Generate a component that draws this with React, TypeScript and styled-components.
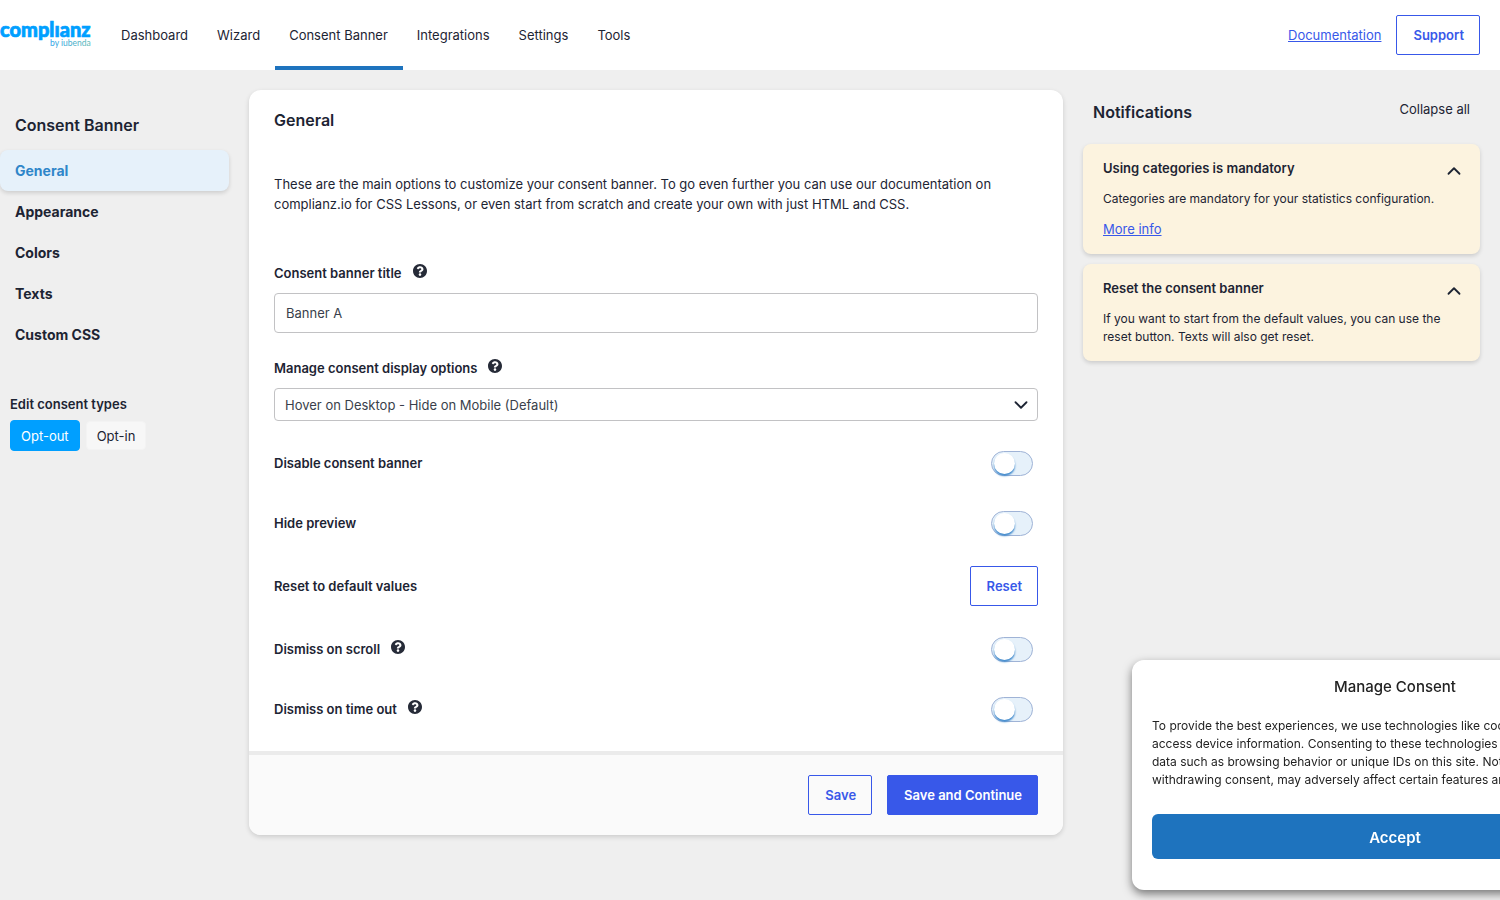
import React from "react";
import styled, { createGlobalStyle, css } from "styled-components";
import { ChevronDown, ChevronUp } from "lucide-react";

const INK = "#1d2433";
const BLUE = "#3858e9";
const BRAND = "#1e73be";

const GlobalStyle = createGlobalStyle`
  *, *::before, *::after { box-sizing: border-box; }
  body {
    margin: 0;
    background: #efefef;
    color: ${INK};
    font-family: Inter, "Liberation Sans", sans-serif;
    font-size: 13px;
    line-height: 20px;
    overflow-x: hidden;
  }
  h1, h2, h3, p, ul { margin: 0; padding: 0; }
  ul { list-style: none; }
  button, input, select { font: inherit; color: inherit; }
  button { cursor: pointer; }
`;

const Header = styled.header`
  display: flex;
  align-items: stretch;
  height: 70px;
  padding-right: 20px;
  background: #fff;
`;

const Logo = styled.svg`
  width: 92px;
  height: 70px;
  flex: none;
  margin-right: 15px;
`;

const Nav = styled.nav`
  display: flex;
  flex: 1;
`;

const NavLink = styled.a<{ $active?: boolean }>`
  display: flex;
  align-items: center;
  padding: 4px 15px 0 14px;
  color: inherit;
  text-decoration: none;
  border-bottom: 4px solid ${(p) => (p.$active ? BRAND : "transparent")};
`;

const HeaderActions = styled.div`
  display: flex;
  align-items: center;
  gap: 15px;
`;

const TextLink = styled.a`
  color: ${BLUE};
  text-decoration: underline;
`;

const Button = styled.button<{ $primary?: boolean }>`
  height: 40px;
  padding: 0 15px 0 16px;
  border: 1px solid ${BLUE};
  border-radius: 2px;
  background: ${(p) => (p.$primary ? BLUE : "transparent")};
  color: ${(p) => (p.$primary ? "#fff" : BLUE)};
  font-weight: 600;
`;

const Page = styled.div`
  display: grid;
  grid-template-columns: 229px minmax(0, 1fr) 397px;
  gap: 20px;
  align-items: start;
  padding: 20px 20px 65px 0;
`;

const SideTitle = styled.h1`
  padding: 25px 15px 15px;
  font-size: 16px;
  font-weight: 600;
`;

const SideLink = styled.a<{ $active?: boolean }>`
  display: block;
  padding: 11px 15px 10px;
  border-radius: 8px;
  color: ${INK};
  font-size: 14px;
  font-weight: 700;
  text-decoration: none;
  ${(p) =>
    p.$active &&
    css`
      background: #e6f1fa;
      color: #2f86c9;
      box-shadow: 0 2px 4px rgba(0, 0, 0, 0.14);
    `}
`;

const ConsentTypes = styled.section`
  padding: 39px 10px 0;
`;

const SubTitle = styled.h2`
  font-size: 13px;
  font-weight: 600;
`;

const TypeRow = styled.div`
  display: flex;
  align-items: center;
  gap: 6px;
  padding-top: 6px;
`;

const TypeButton = styled.button<{ $active?: boolean }>`
  height: ${(p) => (p.$active ? 31 : 29)}px;
  padding: 0 10px;
  border: 1px solid ${(p) => (p.$active ? "#009fff" : "#f3f3f3")};
  border-radius: 4px;
  background: ${(p) => (p.$active ? "#009fff" : "#f7f7f7")};
  color: ${(p) => (p.$active ? "#fff" : INK)};
`;

const Card = styled.form`
  border-radius: 12px;
  background: #fff;
  box-shadow: 0 2px 5px rgba(0, 0, 0, 0.15);
`;

const CardBody = styled.div`
  padding: 20px 25px 25px;
`;

const CardTitle = styled.h2`
  font-size: 16px;
  font-weight: 600;
`;

const Intro = styled.p`
  padding: 44px 0 49px;
`;

const Field = styled.div`
  padding-bottom: 25px;
`;

const Label = styled.div`
  display: flex;
  gap: 11px;
  font-weight: 600;
  svg { margin-top: 1px; }
`;

const FieldLabel = styled(Label)`
  padding-bottom: 10px;
`;

const TextInput = styled.input`
  display: block;
  width: 100%;
  height: 40px;
  padding: 0 11px;
  border: 1px solid #c2c2c4;
  border-radius: 4px;
  background: #fff;
  color: #3a3f4b;
`;

const SelectWrap = styled.div`
  position: relative;
  svg {
    position: absolute;
    top: 6px;
    right: 6px;
    pointer-events: none;
  }
`;

const Select = styled.select`
  appearance: none;
  display: block;
  width: 100%;
  height: 33px;
  padding: 0 10px;
  border: 1px solid #c2c2c4;
  border-radius: 4px;
  background: #fff;
  color: #3a3f4b;
`;

const Options = styled.div`
  display: grid;
  gap: 26px;
`;

const Option = styled.div`
  display: flex;
  align-items: center;
  justify-content: space-between;
  min-height: 34px;
`;

const Toggle = styled.input`
  appearance: none;
  width: 42px;
  height: 25px;
  margin: 0 5px 0 0;
  padding: 1px 2px;
  border: 1px solid #9fb3d6;
  border-radius: 13px;
  background: #e6f1fa;
  cursor: pointer;
  &::before {
    content: "";
    display: block;
    width: 21px;
    height: 21px;
    border-radius: 50%;
    background: #fff;
    box-shadow: 0 2px 2px #3c87cb;
  }
  &:checked::before { margin-left: 15px; }
`;

const CardFooter = styled.div`
  display: flex;
  justify-content: flex-end;
  gap: 15px;
  padding: 20px 25px;
  border-top: 4px solid #ebebeb;
  border-radius: 0 0 12px 12px;
  background: #fafafa;
`;

const NoticeHeader = styled.div`
  display: flex;
  justify-content: space-between;
  align-items: flex-start;
  padding: 9px 10px 22px;
`;

const NoticeTitle = styled.h2`
  padding-top: 3px;
  font-size: 16px;
  font-weight: 600;
`;

const PlainButton = styled.button`
  display: block;
  padding: 0;
  border: 0;
  background: none;
`;

const Notice = styled.article`
  margin-bottom: 10px;
  padding: 14px 15px 15px 20px;
  border-radius: 8px;
  background: #fcf3df;
  box-shadow: 0 2px 4px rgba(0, 0, 0, 0.15);
`;

const NoticeTop = styled.div`
  display: flex;
  justify-content: space-between;
  height: 32px;
  button { height: 22px; margin-top: 2px; }
`;

const NoticeText = styled.p`
  padding-right: 5px;
  font-size: 12px;
  line-height: 18px;
`;

const NoticeMore = styled.p`
  padding-top: 11px;
`;

const Banner = styled.section`
  position: fixed;
  right: -158px;
  bottom: 10px;
  width: 526px;
  padding: 15px 20px 31px;
  border-radius: 12px;
  background: #fff;
  color: #222;
  box-shadow: 0 4px 10px rgba(0, 0, 0, 0.5);
`;

const BannerTitle = styled.h2`
  padding: 2px 0 20px;
  font-size: 15px;
  font-weight: 500;
  text-align: center;
`;

const BannerText = styled.p`
  padding-bottom: 25px;
  font-size: 12px;
  line-height: 18px;
`;

const AcceptButton = styled.button`
  display: block;
  width: 100%;
  height: 45px;
  padding: 3px 0 0;
  border: 0;
  border-radius: 6px;
  background: ${BRAND};
  color: #fff;
  font-size: 15px;
  font-weight: 600;
`;

const HelpIcon = () => (
  <svg width="14" height="14" viewBox="8 8 496 496" role="img" aria-label="Help">
    <path
      fill="#262b38"
      d="M504 256c0 137-111 248-248 248S8 393 8 256 119 8 256 8s248 111 248 248zM262.700 90c-54.500 0-89.300 23-116.500 63.800-3.500 5.300-2.400 12.400 2.700 16.300l34.700 26.300c5.200 3.900 12.600 3 16.700-2.100 17.900-22.700 30.100-35.800 57.300-35.800 20.400 0 45.700 13.100 45.700 33 0 15-12.400 22.700-32.500 34C247.100 238.500 216 254.900 216 296v4c0 6.600 5.400 12 12 12h56c6.600 0 12-5.400 12-12v-1.300c0-28.500 83.200-29.600 83.200-106.700 0-58-60.200-102-116.500-102zM256 338c-25.400 0-46 20.600-46 46s20.600 46 46 46 46-20.600 46-46-20.600-46-46-46z"
    />
  </svg>
);

const NAV_ITEMS = ["Dashboard", "Wizard", "Consent Banner", "Integrations", "Settings", "Tools"];
const SIDE_ITEMS = ["General", "Appearance", "Colors", "Texts", "Custom CSS"];
const TOGGLES_TOP = ["Disable consent banner", "Hide preview"];
const TOGGLES_BOTTOM = ["Dismiss on scroll", "Dismiss on time out"];

const ToggleOption = ({ label, help }: { label: string; help?: boolean }) => {
  const id = label.toLowerCase().replace(/ /g, "-");
  return (
    <Option>
      <Label>
        <label htmlFor={id}>{label}</label>
        {help && <HelpIcon />}
      </Label>
      <Toggle type="checkbox" id={id} />
    </Option>
  );
};

export default function App() {
  return (
    <>
      <GlobalStyle />
      <Header>
        <Logo viewBox="0 0 92 70" role="img" aria-label="Complianz by iubenda">
          <defs>
            <linearGradient id="by" x1="0" x2="1">
              <stop offset="0" stopColor="#2aa3e8" />
              <stop offset="1" stopColor="#5fb8b4" />
            </linearGradient>
          </defs>
          <text
            x="0"
            y="37"
            fontFamily="Lato"
            fontWeight="900"
            fontSize="20"
            fill="#009fff"
            stroke="#009fff"
            strokeWidth="0.7"
          >
            complıanz
          </text>
          <text x="50" y="46" fontFamily="Lato" fontSize="8.500" fill="url(#by)">
            by iubenda
          </text>
        </Logo>
        <Nav>
          {NAV_ITEMS.map((item) => (
            <NavLink key={item} href="#" $active={item === "Consent Banner"}>
              {item}
            </NavLink>
          ))}
        </Nav>
        <HeaderActions>
          <TextLink href="#">Documentation</TextLink>
          <Button type="button">Support</Button>
        </HeaderActions>
      </Header>

      <Page>
        <aside>
          <SideTitle>Consent Banner</SideTitle>
          <ul>
            {SIDE_ITEMS.map((item) => (
              <li key={item}>
                <SideLink href="#" $active={item === "General"}>
                  {item}
                </SideLink>
              </li>
            ))}
          </ul>
          <ConsentTypes>
            <SubTitle>Edit consent types</SubTitle>
            <TypeRow>
              <TypeButton type="button" $active>
                Opt-out
              </TypeButton>
              <TypeButton type="button">Opt-in</TypeButton>
            </TypeRow>
          </ConsentTypes>
        </aside>

        <Card>
          <CardBody>
            <CardTitle>General</CardTitle>
            <Intro>
              These are the main options to customize your consent banner. To go even further you can use our
              documentation on complianz.io for CSS Lessons, or even start from scratch and create your own with just
              HTML and CSS.
            </Intro>
            <Field>
              <FieldLabel>
                <label htmlFor="title">Consent banner title</label>
                <HelpIcon />
              </FieldLabel>
              <TextInput id="title" type="text" defaultValue="Banner A" />
            </Field>
            <Field>
              <FieldLabel>
                <label htmlFor="display">Manage consent display options</label>
                <HelpIcon />
              </FieldLabel>
              <SelectWrap>
                <Select id="display">
                  <option>Hover on Desktop - Hide on Mobile (Default)</option>
                </Select>
                <ChevronDown size={22} />
              </SelectWrap>
            </Field>
            <Options>
              {TOGGLES_TOP.map((label) => (
                <ToggleOption key={label} label={label} />
              ))}
              <Option>
                <Label>Reset to default values</Label>
                <Button type="button">Reset</Button>
              </Option>
              {TOGGLES_BOTTOM.map((label) => (
                <ToggleOption key={label} label={label} help />
              ))}
            </Options>
          </CardBody>
          <CardFooter>
            <Button type="button">Save</Button>
            <Button type="button" $primary>
              Save and Continue
            </Button>
          </CardFooter>
        </Card>

        <aside>
          <NoticeHeader>
            <NoticeTitle>Notifications</NoticeTitle>
            <PlainButton type="button">Collapse all</PlainButton>
          </NoticeHeader>
          <Notice>
            <NoticeTop>
              <SubTitle>Using categories is mandatory</SubTitle>
              <PlainButton type="button" aria-label="Collapse">
                <ChevronUp size={22} />
              </PlainButton>
            </NoticeTop>
            <NoticeText>Categories are mandatory for your statistics configuration.</NoticeText>
            <NoticeMore>
              <TextLink href="#">More info</TextLink>
            </NoticeMore>
          </Notice>
          <Notice>
            <NoticeTop>
              <SubTitle>Reset the consent banner</SubTitle>
              <PlainButton type="button" aria-label="Collapse">
                <ChevronUp size={22} />
              </PlainButton>
            </NoticeTop>
            <NoticeText>
              If you want to start from the default values, you can use the reset button. Texts will also get reset.
            </NoticeText>
          </Notice>
        </aside>
      </Page>

      <Banner aria-label="Manage Consent">
        <BannerTitle>Manage Consent</BannerTitle>
        <BannerText>
          To provide the best experiences, we use technologies like cookies to store and/or access device information.
          Consenting to these technologies will allow us to process data such as browsing behavior or unique IDs on this
          site. Not consenting or withdrawing consent, may adversely affect certain features and functions.
        </BannerText>
        <AcceptButton type="button">Accept</AcceptButton>
      </Banner>
    </>
  );
}
